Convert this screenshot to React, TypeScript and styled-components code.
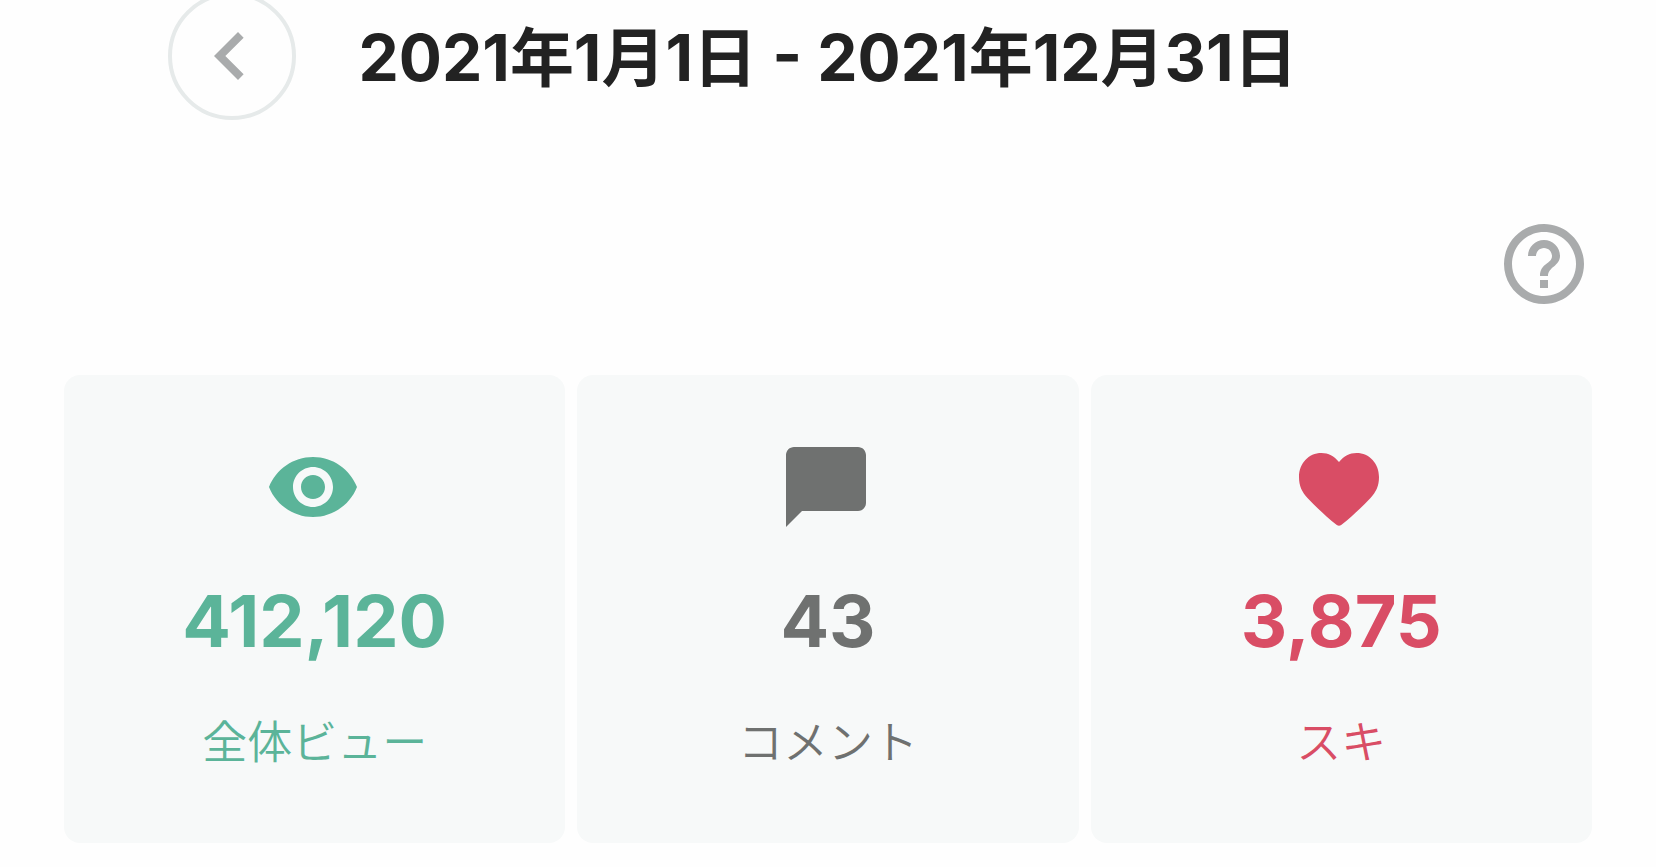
import React from "react";
import styled, { createGlobalStyle } from "styled-components";
import { MdChevronLeft, MdHelpOutline, MdRemoveRedEye } from "react-icons/md";

const GlobalStyle = createGlobalStyle`
  *, *::before, *::after { box-sizing: border-box; }
  body {
    margin: 0;
    background: #fefefe;
    color: #222;
    font-family: Inter, "Noto Sans CJK JP", sans-serif;
  }
`;

const Page = styled.main`
  padding: 0 64px 24px;
  overflow: hidden;
`;

const PeriodBar = styled.header`
  display: grid;
  grid-template-columns: 128px 1fr 128px;
  align-items: center;
  margin: -8px 104px 96px;
`;

const PreviousButton = styled.button`
  display: flex;
  align-items: center;
  justify-content: center;
  width: 128px;
  height: 128px;
  padding: 0 4px 0 0;
  border: 4px solid #e6eaea;
  border-radius: 50%;
  background: transparent;
  color: #a9abac;
  cursor: pointer;
`;

const Period = styled.h1`
  margin: 0;
  padding-top: 4px;
  font-size: 64px;
  font-weight: 700;
  line-height: 80px;
  text-align: center;
  white-space: nowrap;
`;

const Toolbar = styled.div`
  display: flex;
  justify-content: flex-end;
  margin-bottom: 63px;
`;

const HelpButton = styled.button`
  display: flex;
  padding: 0;
  border: 0;
  background: transparent;
  color: #a9abac;
  cursor: pointer;
`;

const Stats = styled.ul`
  display: grid;
  grid-template-columns: repeat(3, 1fr);
  gap: 12px;
  margin: 0;
  padding: 0;
  list-style: none;
`;

const Card = styled.li<{ $color: string }>`
  display: flex;
  flex-direction: column;
  align-items: center;
  gap: 48px;
  padding: 64px 0;
  border-radius: 16px;
  background: #f7f9f9;
  color: ${({ $color }) => $color};
`;

const CardIcon = styled.span`
  display: flex;
  padding-right: 4px;
`;

const Value = styled.strong`
  font-size: 72px;
  font-weight: 700;
  line-height: 76px;
`;

const Label = styled.span`
  font-size: 45px;
  font-weight: 350;
  line-height: 72px;
`;

const CommentIcon = ({ size }: { size: number }) => (
  <svg width={size} height={size} viewBox="0 0 24 24" fill="currentColor" aria-hidden="true">
    <path d="M2 4c0-1.100.900-2 2-2h16c1.100 0 2 .900 2 2v12c0 1.100-.900 2-2 2H6l-4 4V4z" />
  </svg>
);

const HeartIcon = ({ size }: { size: number }) => (
  <svg width={size} height={size} viewBox="0 0 96 96" fill="currentColor" aria-hidden="true">
    <path d="M48 23C43 17 37.500 14 30.500 14C17.500 14 8 24.500 8 38C8 47 11 53 16.500 59C25 68 35 77.500 45.800 86Q48 87.500 50.200 86C61 77.500 71 68 79.500 59C85 53 88 47 88 38C88 24.500 78.500 14 65.500 14C58.500 14 53 17 48 23Z" />
  </svg>
);

const stats = [
  { label: "全体ビュー", value: 412120, color: "#5bb499", Icon: MdRemoveRedEye },
  { label: "コメント", value: 43, color: "#6f7170", Icon: CommentIcon },
  { label: "スキ", value: 3875, color: "#d94d65", Icon: HeartIcon },
];

export default function App() {
  return (
    <Page lang="ja">
      <GlobalStyle />
      <PeriodBar>
        <PreviousButton type="button" aria-label="前の期間">
          <MdChevronLeft size={96} />
        </PreviousButton>
        <Period>2021年1月1日 - 2021年12月31日</Period>
      </PeriodBar>
      <Toolbar>
        <HelpButton type="button" aria-label="ヘルプ">
          <MdHelpOutline size={96} />
        </HelpButton>
      </Toolbar>
      <Stats>
        {stats.map(({ label, value, color, Icon }) => (
          <Card key={label} $color={color}>
            <CardIcon>
              <Icon size={96} />
            </CardIcon>
            <Value>{value.toLocaleString("en-US")}</Value>
            <Label>{label}</Label>
          </Card>
        ))}
      </Stats>
    </Page>
  );
}
